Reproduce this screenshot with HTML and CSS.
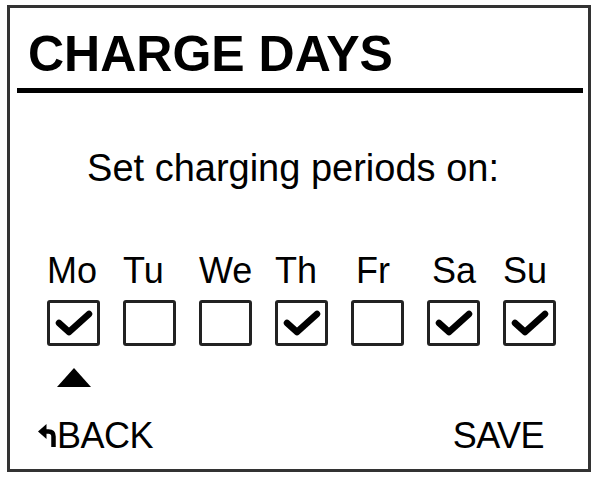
FILE: index.html
```html
<!DOCTYPE html>
<html lang="en">
<head>
  <meta charset="UTF-8" />
  <meta name="viewport" content="width=device-width, initial-scale=1.0"/>
  <title>Charge Days</title>
  <link rel="stylesheet" href="styles.css">
</head>
<body>
  <div class="screen">
    <div class="header">CHARGE DAYS</div>
    <div class="rule"></div>

    <div class="prompt">Set charging periods on:</div>

    <div class="days">
      <div class="day">
        <span class="day-name">Mo</span>
        <div class="box checked"><svg viewBox="0 0 47 40"><path d="M9 20 L19 29 L39 11" /></svg></div>
        <div class="cursor"></div>
      </div>
      <div class="day">
        <span class="day-name">Tu</span>
        <div class="box"></div>
      </div>
      <div class="day">
        <span class="day-name">We</span>
        <div class="box"></div>
      </div>
      <div class="day">
        <span class="day-name">Th</span>
        <div class="box checked"><svg viewBox="0 0 47 40"><path d="M9 20 L19 29 L39 11" /></svg></div>
      </div>
      <div class="day">
        <span class="day-name shift">Fr</span>
        <div class="box"></div>
      </div>
      <div class="day">
        <span class="day-name shift">Sa</span>
        <div class="box checked"><svg viewBox="0 0 47 40"><path d="M9 20 L19 29 L39 11" /></svg></div>
      </div>
      <div class="day">
        <span class="day-name">Su</span>
        <div class="box checked"><svg viewBox="0 0 47 40"><path d="M9 20 L19 29 L39 11" /></svg></div>
      </div>
    </div>

    <div class="footer">
      <div class="back">
        <svg class="back-icon" viewBox="0 0 18 24">
          <path d="M0 7.5 L8.5 0 L8.5 15 Z" />
          <path class="stem" d="M7 7.5 L10.5 7.5 Q15.5 7.5 15.5 12.5 L15.5 23" />
        </svg>
        <span>BACK</span>
      </div>
      <div class="save">SAVE</div>
    </div>
  </div>
</body>
</html>
```

FILE: styles.css
```css
body {
  margin: 0;
  font-family: "Liberation Sans", Arial, sans-serif;
  background-color: #ffffff;
  color: #000000;
}

.screen {
  box-sizing: border-box;
  width: 584px;
  height: 467px;
  margin: 5px 0 0 7px;
  border: 3px solid #333;
  display: flex;
  flex-direction: column;
}

.header {
  font-size: 50px;
  font-weight: bold;
  line-height: 50px;
  padding: 21px 0 0 18px;
}

.rule {
  height: 5px;
  background-color: #000;
  margin: 9px 5px 0 7px;
}

.prompt {
  font-size: 38px;
  line-height: 40px;
  text-align: center;
  padding-right: 12px;
  margin-top: 55px;
}

.days {
  display: flex;
  gap: 23px;
  padding-left: 37px;
  margin-top: 63px;
}

.day {
  width: 53px;
  display: flex;
  flex-direction: column;
  align-items: flex-start;
}

.day-name {
  font-size: 36px;
  line-height: 40px;
  white-space: nowrap;
}

.day-name.shift {
  margin-left: 5px;
}

.box {
  box-sizing: border-box;
  width: 53px;
  height: 46px;
  margin-top: 9px;
  border: 3px solid #222;
  border-radius: 3px;
}

.box svg {
  display: block;
  width: 47px;
  height: 40px;
}

.box path {
  fill: none;
  stroke: #000;
  stroke-width: 6.5;
  stroke-linecap: round;
  stroke-linejoin: round;
}

.cursor {
  align-self: center;
  width: 0;
  height: 0;
  margin-top: 22px;
  border-left: 17px solid transparent;
  border-right: 17px solid transparent;
  border-bottom: 19px solid #000;
}

.footer {
  display: flex;
  justify-content: space-between;
  align-items: center;
  margin-top: auto;
  padding: 0 44px 13px 28px;
}

.back {
  display: flex;
  align-items: center;
  gap: 1px;
}

.back-icon {
  width: 18px;
  height: 24px;
}

.back-icon path {
  fill: #000;
}

.back-icon .stem {
  fill: none;
  stroke: #000;
  stroke-width: 4.5;
}

.back span,
.save {
  font-size: 36px;
  line-height: 40px;
  letter-spacing: -0.5px;
}
```
